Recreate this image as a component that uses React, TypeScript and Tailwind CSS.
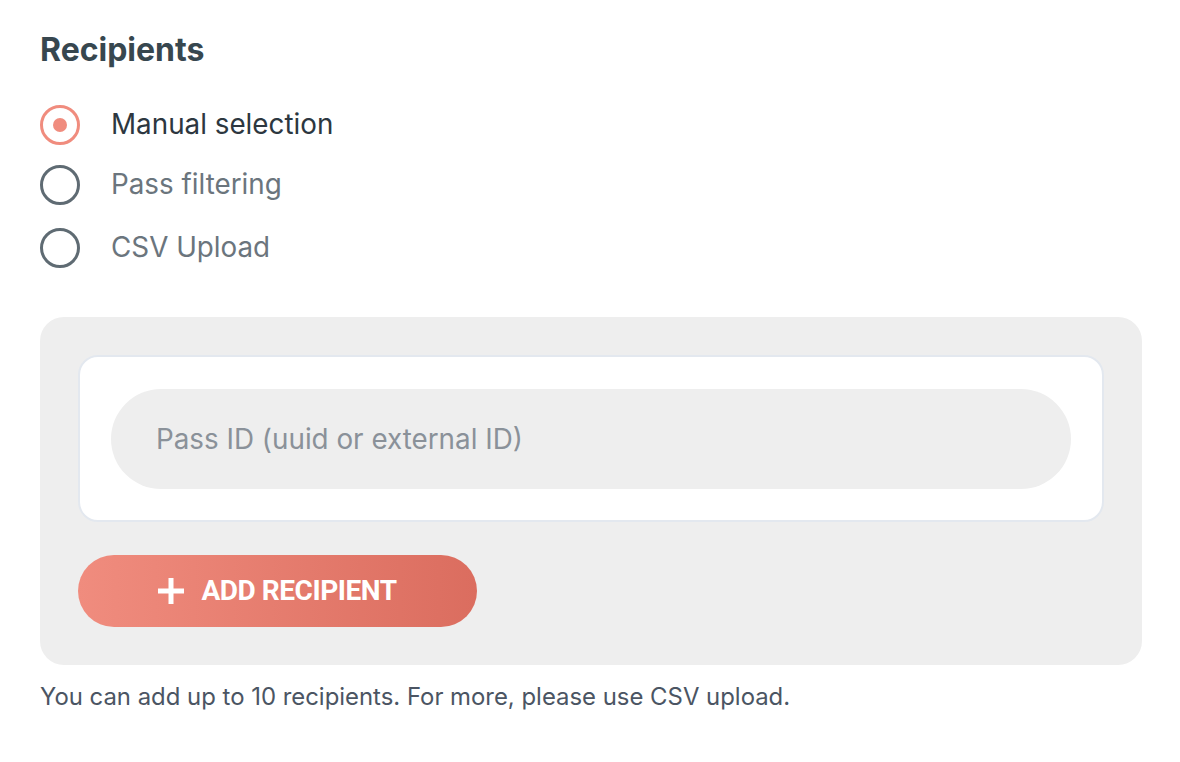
import { useState } from 'react';

const options = ['Manual selection', 'Pass filtering', 'CSV Upload'];
const rowHeights = ['h-[50px]', 'h-[70px]', 'h-[56px]'];

export default function App() {
  const [selected, setSelected] = useState(0);

  return (
    <div className="min-h-screen bg-white px-10 pt-[30px] font-['Inter',sans-serif]">
      <h2 className="text-[32px] leading-[40px] font-bold text-[#37474f]">Recipients</h2>

      <div className="mt-[30px] flex flex-col">
        {options.map((label, i) => (
          <label
            key={label}
            className={`flex items-center gap-[31px] cursor-pointer ${rowHeights[i]}`}
            onClick={() => setSelected(i)}
          >
            <span
              className={`flex h-10 w-10 items-center justify-center rounded-full border-[3px] ${
                selected === i ? 'border-[#f08c7e]' : 'border-[#5f6b73]'
              }`}
            >
              {selected === i && <span className="h-[14px] w-[14px] rounded-full bg-[#f08c7e]" />}
            </span>
            <span className={`text-[27.8px] ${selected === i ? 'text-[#2d3740]' : 'text-[#6b757d]'}`}>{label}</span>
          </label>
        ))}
      </div>

      <div className="mt-[41px] w-[1102px] rounded-[24px] bg-[#eeeeee] px-[38px] pt-[38px] pb-[38px]">
        <div className="rounded-[20px] border-2 border-[#e3e8ef] bg-white px-[31px] pt-[32px] pb-[31px]">
          <input
            className="h-[100px] w-full rounded-full bg-[#eeeeee] px-[45px] text-[27.8px] text-[#37474f] outline-none placeholder:text-[#8a9199]"
            placeholder="Pass ID (uuid or external ID)"
          />
        </div>
        <button className="mt-[33px] flex h-[72px] w-[399px] items-center justify-center gap-[17px] rounded-full bg-gradient-to-r from-[#f08c7e] to-[#db6d5f] text-white">
          <svg width="26" height="26" viewBox="0 0 26 26">
            <path d="M13 0v26M0 13h26" stroke="white" strokeWidth="5" />
          </svg>
          <span className="font-['Roboto',sans-serif] text-[28px] font-bold tracking-[-0.45px]">
            ADD RECIPIENT
          </span>
        </button>
      </div>

      <p className="mt-[16px] text-[23.9px] leading-[32px] text-[#4b5563]">
        You can add up to 10 recipients. For more, please use CSV upload.
      </p>
    </div>
  );
}
